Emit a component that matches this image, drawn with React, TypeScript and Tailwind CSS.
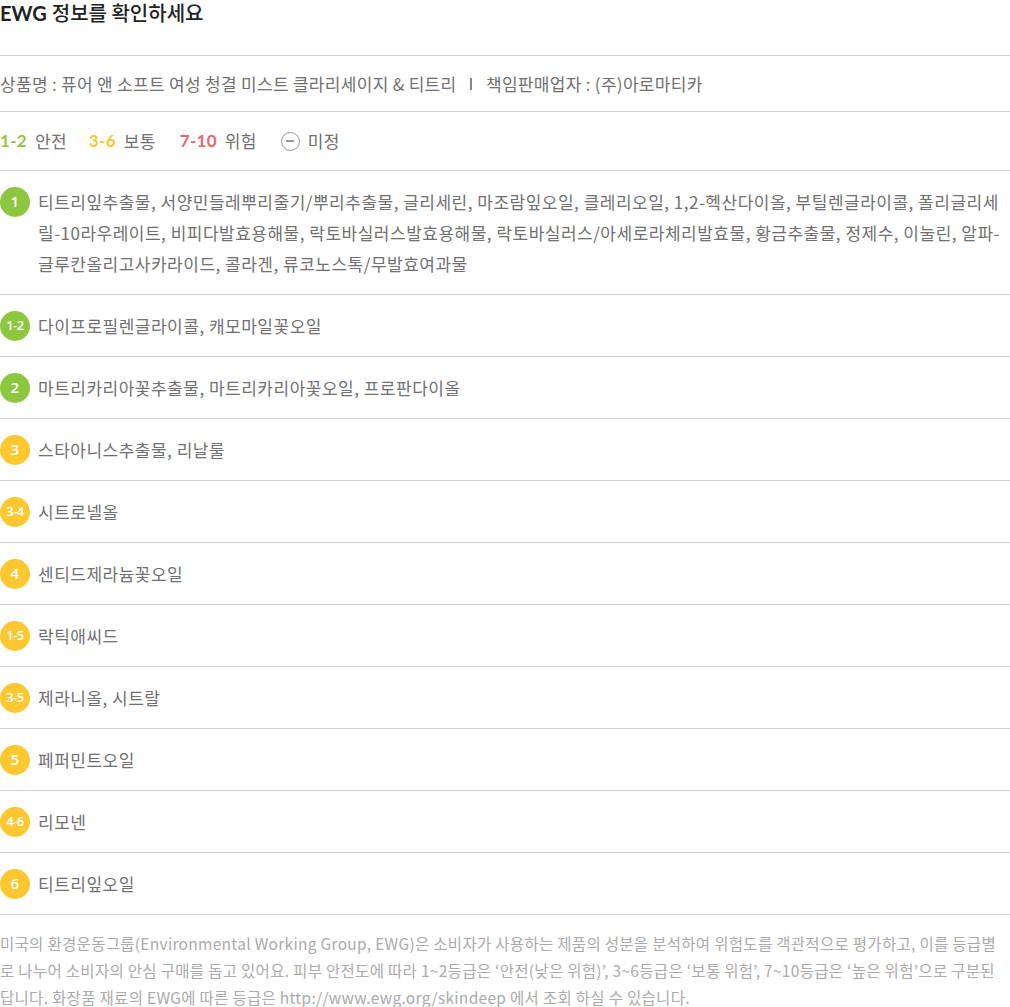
const font = "font-['Noto_Sans_CJK_KR','Noto_Sans',sans-serif]";

type Item = { grade: string; color: "green" | "yellow"; text: string };

const items: Item[] = [
  {
    grade: "1",
    color: "green",
    text: "티트리잎추출물, 서양민들레뿌리줄기/뿌리추출물, 글리세린, 마조람잎오일, 클레리오일, 1,2-헥산다이올, 부틸렌글라이콜, 폴리글리세릴-10라우레이트, 비피다발효용해물, 락토바실러스발효용해물, 락토바실러스/아세로라체리발효물, 황금추출물, 정제수, 이눌린, 알파-글루칸올리고사카라이드, 콜라겐, 류코노스톡/무발효여과물",
  },
  { grade: "1-2", color: "green", text: "다이프로필렌글라이콜, 캐모마일꽃오일" },
  { grade: "2", color: "green", text: "마트리카리아꽃추출물, 마트리카리아꽃오일, 프로판다이올" },
  { grade: "3", color: "yellow", text: "스타아니스추출물, 리날룰" },
  { grade: "3-4", color: "yellow", text: "시트로넬올" },
  { grade: "4", color: "yellow", text: "센티드제라늄꽃오일" },
  { grade: "1-5", color: "yellow", text: "락틱애씨드" },
  { grade: "3-5", color: "yellow", text: "제라니올, 시트랄" },
  { grade: "5", color: "yellow", text: "페퍼민트오일" },
  { grade: "4-6", color: "yellow", text: "리모넨" },
  { grade: "6", color: "yellow", text: "티트리잎오일" },
];

const Badge = ({ grade, color }: { grade: string; color: "green" | "yellow" }) => (
  <span
    className={`flex h-[30px] w-[30px] shrink-0 items-center justify-center rounded-full font-['Open_Sans',sans-serif] font-semibold text-white ${
      color === "green" ? "bg-[#8dc63f]" : "bg-[#fdc72f]"
    } ${grade.length > 1 ? "text-[13px] tracking-[-0.5px]" : "text-[15px]"}`}
  >
    {grade}
  </span>
);

const App = () => {
  return (
    <div className={`w-[1010px] bg-white ${font} text-[#707070]`}>
      <h1 className="flex h-[55px] items-start text-[20px] leading-[26px] text-[#222]">
        <span className="font-['Lato',sans-serif] font-bold mr-[5px]">EWG</span>
        <span className="font-medium">정보를 확인하세요</span>
      </h1>

      <div className="flex h-[56px] items-center border-t border-[#cfcfcf] text-[17px] tracking-[0.3px]">
        <span>상품명 : 퓨어 앤 소프트 여성 청결 미스트 클라리세이지 &amp; 티트리</span>
        <span className="mx-[14px] h-[12px] w-[1.5px] bg-[#888]" />
        <span>책임판매업자 : (주)아로마티카</span>
      </div>

      <div className="flex h-[59px] items-center border-t border-[#cfcfcf] text-[17px] tracking-[0.3px]">
        <span className="font-['Lato',sans-serif] font-bold text-[#8dc63f]">1-2</span>
        <span className="ml-[8px]">안전</span>
        <span className="ml-[22px] font-['Lato',sans-serif] font-bold text-[#fdc72f]">3-6</span>
        <span className="ml-[8px]">보통</span>
        <span className="ml-[24px] font-['Lato',sans-serif] font-bold text-[#e8656a]">7-10</span>
        <span className="ml-[8px]">위험</span>
        <span className="ml-[24px] flex h-[19px] w-[19px] items-center justify-center rounded-full border-[1.5px] border-[#999]">
          <span className="h-[1.5px] w-[8px] bg-[#999]" />
        </span>
        <span className="ml-[8px]">미정</span>
      </div>

      {items.map((it) => (
        <div
          key={it.grade}
          className="flex items-start gap-[8px] border-t border-[#cfcfcf] py-[15px] text-[17px] leading-[31px] tracking-[0.5px]"
        >
          <span className="flex h-[31px] items-center">
            <Badge grade={it.grade} color={it.color} />
          </span>
          <p className="flex-1">{it.text}</p>
        </div>
      ))}

      <p className="border-t border-[#cfcfcf] pt-[15px] pr-[10px] pb-[4px] text-[15.5px] leading-[27px] tracking-[0.3px] text-[#aaa]">
        미국의 환경운동그룹(Environmental Working Group, EWG)은 소비자가 사용하는 제품의 성분을 분석하여 위험도를 객관적으로 평가하고, 이를 등급별로 나누어 소비자의 안심 구매를 돕고 있어요. 피부 안전도에 따라 1~2등급은 ‘안전(낮은 위험)’, 3~6등급은 ‘보통 위험’, 7~10등급은 ‘높은 위험’으로 구분된답니다. 화장품 재료의 EWG에 따른 등급은 http://www.ewg.org/skindeep 에서 조회 하실 수 있습니다.
      </p>
    </div>
  );
};

export default App;
